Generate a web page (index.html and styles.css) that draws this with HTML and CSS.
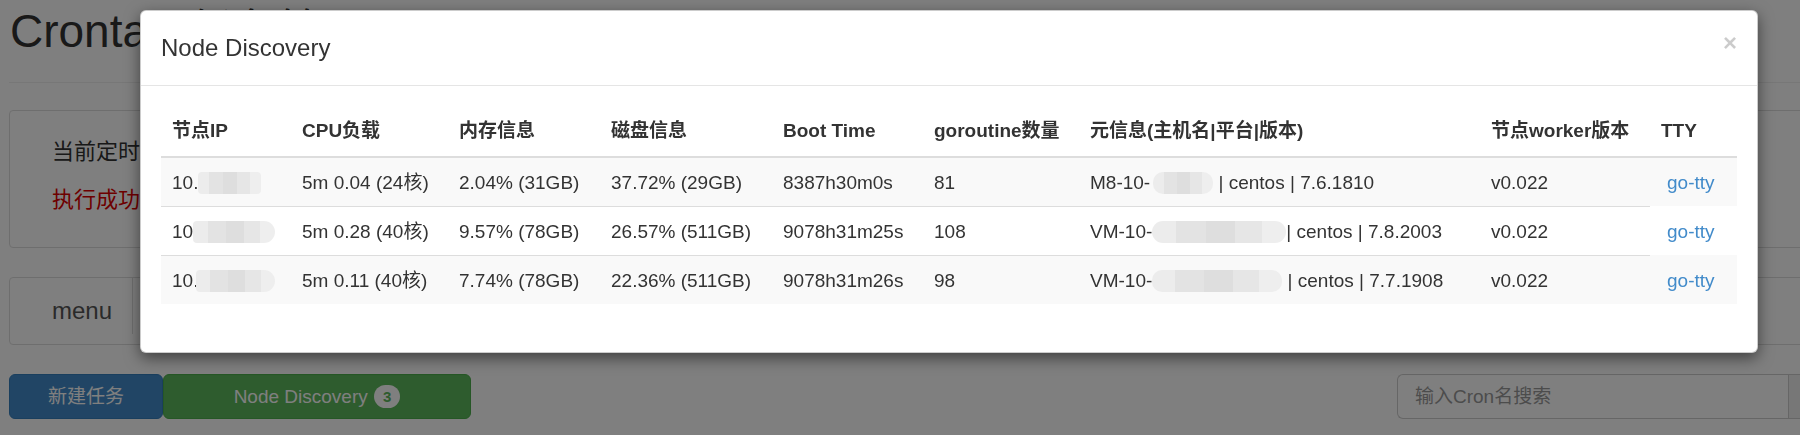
FILE: index.html
```html
<!DOCTYPE html>
<html lang="zh-CN">
<head>
<meta charset="utf-8">
<title>Crontab 任务管理</title>
<link rel="stylesheet" href="styles.css">
</head>
<body>
<div class="page">
  <h1 class="page-title">Crontab 任务管理</h1>
  <div class="status-box">
    <p class="status-line">当前定时任务数量: 28 个，在线节点: 3 个</p>
    <p class="status-ok">执行成功: 1024 次</p>
  </div>
  <div class="menu-bar">
    <div class="menu-brand">menu</div>
    <div class="menu-divider"></div>
  </div>
  <div class="toolbar">
    <button class="btn btn-primary" type="button">新建任务</button>
    <button class="btn btn-success" type="button">Node Discovery <span class="badge">3</span></button>
    <div class="search">
      <input class="search-input" type="text" placeholder="输入Cron名搜索">
      <span class="search-addon"></span>
    </div>
  </div>
</div>

<div class="backdrop"></div>

<div class="modal">
  <div class="modal-header">
    <span class="close">×</span>
    <h4 class="modal-title">Node Discovery</h4>
  </div>
  <div class="modal-body">
    <table class="nodes">
      <colgroup>
        <col class="w-ip"><col class="w-cpu"><col class="w-mem"><col class="w-disk"><col class="w-boot"><col class="w-go"><col class="w-meta"><col class="w-ver"><col class="w-tty">
      </colgroup>
      <thead>
        <tr>
          <th>节点IP</th><th>CPU负载</th><th>内存信息</th><th>磁盘信息</th><th>Boot Time</th><th>goroutine数量</th><th>元信息(主机名|平台|版本)</th><th>节点worker版本</th><th>TTY</th>
        </tr>
      </thead>
      <tbody>
        <tr class="odd">
          <td>10.<span class="blob blob-ip1"></span></td>
          <td>5m 0.04 (24核)</td>
          <td>2.04% (31GB)</td>
          <td>37.72% (29GB)</td>
          <td>8387h30m0s</td>
          <td>81</td>
          <td>M8-10-<span class="blob blob-m1"></span> | centos | 7.6.1810</td>
          <td>v0.022</td>
          <td class="tty"><a href="#">go-tty</a></td>
        </tr>
        <tr>
          <td>10.<span class="blob blob-ip2"></span></td>
          <td>5m 0.28 (40核)</td>
          <td>9.57% (78GB)</td>
          <td>26.57% (511GB)</td>
          <td>9078h31m25s</td>
          <td>108</td>
          <td>VM-10-<span class="blob blob-m2"></span>| centos | 7.8.2003</td>
          <td>v0.022</td>
          <td class="tty"><a href="#">go-tty</a></td>
        </tr>
        <tr class="odd">
          <td>10.<span class="blob blob-ip3"></span></td>
          <td>5m 0.11 (40核)</td>
          <td>7.74% (78GB)</td>
          <td>22.36% (511GB)</td>
          <td>9078h31m26s</td>
          <td>98</td>
          <td>VM-10-<span class="blob blob-m3"></span> | centos | 7.7.1908</td>
          <td>v0.022</td>
          <td class="tty"><a href="#">go-tty</a></td>
        </tr>
      </tbody>
    </table>
  </div>
</div>
</body>
</html>
```
FILE: styles.css
```css
html, body {
  margin: 0;
  padding: 0;
  overflow: hidden;
  background: #fff;
}
body {
  font-family: "Liberation Sans", "Noto Sans CJK SC", sans-serif;
  color: #333;
  width: 1800px;
  height: 435px;
}
.page {
  width: 1850px;
  padding-left: 9px;
}
.page-title {
  margin: 5px 0 0 0;
  padding: 0 0 25px 1px;
  font-size: 46px;
  line-height: 52px;
  font-weight: 400;
  color: #333;
  border-bottom: 1px solid #eee;
}
.status-box {
  margin-top: 27px;
  border: 1px solid #ddd;
  border-radius: 4px;
  padding: 25px 20px 15px 42px;
  background: #fff;
}
.status-box p {
  margin: 0 0 16px 0;
  font-size: 22px;
  line-height: 32px;
}
.status-ok {
  color: #d00;
}
.menu-bar {
  margin-top: 29px;
  height: 66px;
  border: 1px solid #ddd;
  border-radius: 4px;
  display: flex;
  align-items: flex-start;
}
.menu-brand {
  width: 80px;
  padding-left: 42px;
  font-size: 24px;
  line-height: 66px;
  color: #555;
}
.menu-divider {
  width: 1px;
  height: 56px;
  background: #ddd;
}
.toolbar {
  margin-top: 29px;
  display: flex;
  align-items: stretch;
}
.btn {
  font-family: "Liberation Sans", "Noto Sans CJK SC", sans-serif;
  font-size: 19px;
  line-height: 25px;
  padding: 9px 0;
  border: 1px solid transparent;
  border-radius: 6px;
  color: #fff;
  text-align: center;
  cursor: pointer;
}
.btn-primary {
  width: 154px;
  background: #428bca;
  border-color: #357ebd;
}
.btn-success {
  width: 308px;
  background: #5cb85c;
  border-color: #4cae4c;
}
.badge {
  display: inline-block;
  margin-left: 1px;
  padding: 2px 9px;
  font-size: 15px;
  line-height: 19px;
  font-weight: 700;
  color: #5cb85c;
  background: #fff;
  border-radius: 12px;
  vertical-align: 1px;
}
.search {
  margin-left: auto;
  display: flex;
  height: 45px;
}
.search-input {
  box-sizing: border-box;
  width: 391px;
  height: 45px;
  border: 1px solid #ccc;
  border-right: 0;
  border-radius: 6px 0 0 6px;
  padding: 0 0 0 17px;
  font-family: "Liberation Sans", "Noto Sans CJK SC", sans-serif;
  font-size: 19px;
  color: #555;
  background: #fff;
  outline: none;
}
.search-input::placeholder {
  color: #999;
}
.search-addon {
  box-sizing: border-box;
  width: 71px;
  height: 45px;
  border: 1px solid #ccc;
  background: #eee;
}
.backdrop {
  position: fixed;
  left: 0;
  top: 0;
  right: 0;
  bottom: 0;
  background: rgba(0, 0, 0, 0.5);
}
.modal {
  position: absolute;
  left: 140px;
  top: 10px;
  width: 1618px;
  box-sizing: border-box;
  background: #fff;
  border: 1px solid rgba(0, 0, 0, 0.2);
  border-radius: 6px;
  box-shadow: 0 5px 15px rgba(0, 0, 0, 0.5);
}
.modal-header {
  padding: 20px;
  border-bottom: 1px solid #e5e5e5;
}
.modal-title {
  margin: 0;
  font-size: 24px;
  line-height: 34px;
  font-weight: 400;
  color: #333;
}
.close {
  float: right;
  font-size: 24px;
  line-height: 24px;
  font-weight: 700;
  color: #000;
  opacity: 0.2;
  margin-top: 0;
}
.modal-body {
  padding: 21px 20px 48px 20px;
}
.nodes {
  width: 1576px;
  table-layout: fixed;
  border-collapse: separate;
  border-spacing: 0;
  font-size: 19px;
}
.w-ip { width: 130px; }
.w-cpu { width: 157px; }
.w-mem { width: 152px; }
.w-disk { width: 172px; }
.w-boot { width: 151px; }
.w-go { width: 156px; }
.w-meta { width: 401px; }
.w-ver { width: 170px; }
.w-tty { width: 87px; }
.nodes th {
  text-align: left;
  font-weight: 700;
  line-height: 26px;
  padding: 11px 10px 12px 11px;
  border-bottom: 2px solid #ddd;
  white-space: nowrap;
}
.nodes td {
  line-height: 26px;
  padding: 12px 10px 10px 11px;
  border-top: 1px solid #ddd;
  white-space: nowrap;
}
.nodes tbody tr:first-child td {
  border-top: 0;
}
.nodes tr.odd td {
  background: #f9f9f9;
}
.nodes td.tty {
  border-top: 0;
  padding-left: 17px;
}
.tty a {
  color: #428bca;
  text-decoration: none;
}
.blob {
  display: inline-block;
  height: 22px;
  vertical-align: -5px;
  border-radius: 10px;
  background: linear-gradient(90deg, #ececec 0 18%, #e3e3e3 18% 40%, #dedede 40% 62%, #e6e6e6 62% 82%, #eeeeee 82% 100%);
}
.blob-ip1 { width: 63px; border-radius: 4px; }
.blob-ip2 { width: 82px; margin-left: -5px; border-radius: 4px 11px 11px 4px; }
.blob-ip3 { width: 79px; margin-left: -2px; border-radius: 4px 11px 11px 4px; }
.blob-m1 { width: 60px; margin-left: 3px; }
.blob-m2 { width: 134px; margin-left: 0; border-radius: 11px; }
.blob-m3 { width: 130px; margin-left: 0; }
```
